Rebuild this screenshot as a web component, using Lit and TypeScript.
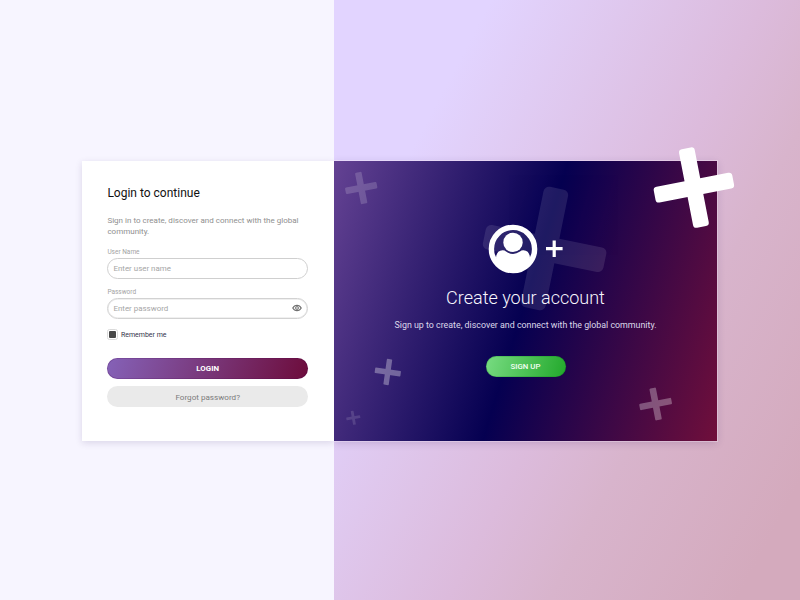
import { LitElement, html, svg, css } from "lit";
import { customElement } from "lit/decorators.js";

interface Cross {
  cx: number;
  cy: number;
  arm: number;
  thick: number;
  radius: number;
  angle: number;
  opacity: number;
}

// Decorative crosses, in the promo panel's own coordinates.
const CROSSES: Cross[] = [
  { cx: 27.2, cy: 27, arm: 32, thick: 6.6, radius: 1.2, angle: -11, opacity: 0.17 },
  { cx: 210.6, cy: 87.5, arm: 123, thick: 25, radius: 5.5, angle: 11.5, opacity: 0.1 },
  { cx: 53.8, cy: 211, arm: 26, thick: 5.4, radius: 0.7, angle: 8, opacity: 0.32 },
  { cx: 19.3, cy: 256.8, arm: 14, thick: 2.8, radius: 0.5, angle: -10, opacity: 0.13 },
  { cx: 321.6, cy: 243, arm: 32.5, thick: 6.6, radius: 1.2, angle: -11, opacity: 0.3 },
  { cx: 359.9, cy: 26.6, arm: 80, thick: 16, radius: 3.5, angle: -11, opacity: 1 },
];

@customElement("app-root")
export class AppRoot extends LitElement {
  static styles = css`
    :host {
      display: grid;
      grid-template-columns: 334px 1fr;
      height: 600px;
      overflow: hidden;
      font-family: Roboto, "Liberation Sans", sans-serif;
      background: #f7f5ff;
    }
    .side {
      display: flex;
      align-items: center;
      padding-top: 1px;
      box-sizing: border-box;
    }
    .left {
      justify-content: flex-end;
    }
    .right {
      background: linear-gradient(118deg, #e2d4ff 20%, #dcbbdc 55%, #d8b4cc 68%, #d4aabd 92%);
    }
    .login {
      box-sizing: border-box;
      width: 252px;
      height: 280px;
      padding: 25px 26px 0 25.4px;
      background: #fff;
      box-shadow: 0 2px 7px rgba(50, 30, 90, 0.14);
      clip-path: inset(-20px 0 -20px -20px);
      display: flex;
      flex-direction: column;
    }
    h1 {
      margin: 0;
      font-size: 12px;
      line-height: 14px;
      font-weight: 400;
      color: #111;
      white-space: nowrap;
    }
    .intro {
      margin: 15px 0 0;
      width: 200.6px;
      font-size: 8.03px;
      line-height: 11px;
      color: #8f8f8f;
    }
    .label {
      margin-top: 9px;
      font-size: 6.5px;
      line-height: 8px;
      color: #a3a3a3;
    }
    .label.first {
      margin-top: 11px;
    }
    .field {
      margin-top: 2px;
      height: 21px;
      box-sizing: border-box;
      border: 1px solid #cfcfcf;
      border-radius: 11px;
      padding: 0 5px;
      display: flex;
      align-items: center;
      justify-content: space-between;
      font-size: 7.95px;
      color: #a6a6a6;
    }
    .field.active {
      border-color: #d2d2d2;
      box-shadow: inset 0 0 0 0.5px #e2e2e2;
    }
    .eye {
      width: 10px;
      height: 8px;
    }
    .remember {
      margin-top: 10.5px;
      height: 11px;
      display: flex;
      align-items: center;
      gap: 2.5px;
      font-size: 7px;
      color: #33334b;
    }
    .check {
      box-sizing: border-box;
      display: flex;
      align-items: center;
      justify-content: center;
      width: 11px;
      height: 11px;
      border: 1px solid #dadada;
      border-radius: 2.5px;
    }
    .tick {
      width: 7px;
      height: 7px;
      border-radius: 1px;
      background: #484848;
    }
    .button {
      height: 21px;
      border-radius: 11px;
      display: flex;
      align-items: center;
      justify-content: center;
      font-size: 8.1px;
    }
    .primary {
      margin-top: 17.5px;
      background: linear-gradient(107deg, #8562b8, #6d0c3b);
      box-shadow: inset 0 0 0 0.8px rgba(70, 0, 80, 0.25);
      color: #fff;
      font-weight: 700;
      font-size: 7.9px;
    }
    .secondary {
      margin-top: 7.5px;
      background: #eaeaea;
      color: #7c7c7c;
    }
    .promo {
      position: relative;
      width: 383px;
      height: 280px;
      background: linear-gradient(107deg, #644293 0%, #050051 50%, #700f3b 100%);
      box-shadow: 0 0 0 1px rgba(255, 240, 255, 0.35), 0 2px 8px rgba(50, 30, 90, 0.18);
      clip-path: inset(-60px -60px -60px 0);
      color: #fff;
    }
    .crosses {
      position: absolute;
      inset: 0;
      width: 383px;
      height: 280px;
      overflow: visible;
    }
    .content {
      display: flex;
      flex-direction: column;
      align-items: center;
      padding-top: 63px;
      position: relative;
    }
    .badge {
      width: 76px;
      height: 50px;
    }
    h2 {
      margin: 12px 0 0;
      font-size: 18px;
      line-height: 24px;
      font-weight: 300;
      color: #f8f6fd;
      white-space: nowrap;
    }
    .lead {
      margin: 9px 0 0;
      font-size: 8.85px;
      line-height: 13px;
      color: #dcd8ea;
      white-space: nowrap;
    }
    .signup {
      margin-top: 24.5px;
      width: 80px;
      background: linear-gradient(107deg, #78dc82, #22a82b);
      box-shadow: inset 0 0 0 0.7px rgba(0, 120, 20, 0.25);
      font-size: 7.8px;
      color: #f4fff4;
      font-weight: 500;
    }
  `;

  private cross(c: Cross) {
    const h = c.arm / 2;
    const t = c.thick / 2;
    return svg`<g transform="translate(${c.cx} ${c.cy}) rotate(${c.angle})" opacity=${c.opacity} fill="#fff">
      <rect x=${-h} y=${-t} width=${c.arm} height=${c.thick} rx=${c.radius}></rect>
      <rect x=${-t} y=${-h} width=${c.thick} height=${c.arm} rx=${c.radius}></rect>
    </g>`;
  }

  render() {
    return html`
      <div class="side left">
        <div class="login">
          <h1>Login to continue</h1>
          <p class="intro">Sign in to create, discover and connect with the global community.</p>
          <div class="label first">User Name</div>
          <div class="field"><span>Enter user name</span></div>
          <div class="label">Password</div>
          <div class="field active">
            <span>Enter password</span>
            <svg class="eye" viewBox="0 0 10 8">
              <path d="M.8 4C1.8 2.1 3.2 1.300 5 1.300S8.200 2.100 9.200 4C8.200 5.900 6.800 6.700 5 6.700S1.800 5.900.8 4Z" fill="#fff" stroke="#707070" stroke-width="1.200" />
              <circle cx="5" cy="4" r="1.400" fill="#fff" stroke="#707070" stroke-width="1" />
            </svg>
          </div>
          <div class="remember"><span class="check"><span class="tick"></span></span><span>Remember me</span></div>
          <div class="button primary">LOGIN</div>
          <div class="button secondary">Forgot password?</div>
        </div>
      </div>
      <div class="side right">
        <div class="promo">
          <svg class="crosses" viewBox="0 0 383 280">${CROSSES.map((c) => this.cross(c))}</svg>
          <div class="content">
            <svg class="badge" viewBox="0 0 76 50">
              <circle cx="25" cy="25" r="21.600" fill="none" stroke="#fff" stroke-width="5.400" />
              <path d="M8 34C8.200 29 10.500 26.500 14.600 26.200Q16.700 26.100 18 27.600Q25 32.400 32 27.600Q33.300 26.100 35.400 26.200C39.500 26.500 41.800 29 42 34L40 41Q25 52 10 41Z" fill="#fff" />
              <circle cx="25" cy="18.400" r="9.700" fill="#fff" />
              <path d="M66.200 16.400V33M58 24.700H74.600" stroke="#fff" stroke-width="3.200" />
            </svg>
            <h2>Create your account</h2>
            <p class="lead">Sign up to create, discover and connect with the global community.</p>
            <div class="button signup">SIGN UP</div>
          </div>
        </div>
      </div>
    `;
  }
}
